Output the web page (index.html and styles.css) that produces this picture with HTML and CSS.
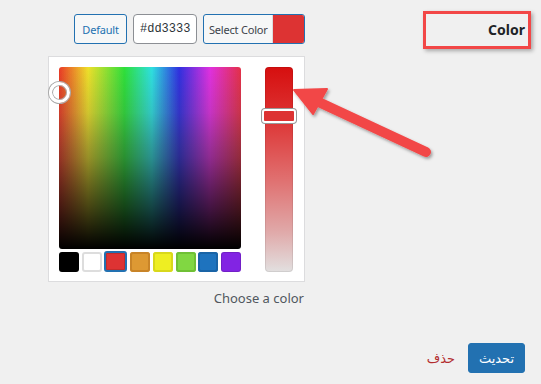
FILE: index.html
```html
<!DOCTYPE html>
<html lang="en">
<head>
<meta charset="utf-8">
<title>Color</title>
<link rel="stylesheet" href="styles.css">
</head>
<body>
<div class="page">
  <div class="top">
    <div class="field">
      <div class="controls">
        <button class="btn btn-default">Default</button>
        <input class="hex" type="text" value="#dd3333">
        <button class="btn btn-select"><span class="sel-text">Select Color</span><span class="sel-swatch"></span></button>
      </div>
      <div class="panel">
        <div class="picker-left">
          <div class="square">
            <span class="marker"></span>
          </div>
          <div class="swatches">
            <span class="sw sw-black"></span>
            <span class="sw sw-white"></span>
            <span class="sw sw-red sw-active"></span>
            <span class="sw sw-orange"></span>
            <span class="sw sw-yellow"></span>
            <span class="sw sw-green"></span>
            <span class="sw sw-blue"></span>
            <span class="sw sw-purple"></span>
          </div>
        </div>
        <div class="slider">
          <span class="handle"></span>
        </div>
      </div>
      <div class="hint">Choose a color</div>
    </div>
    <div class="label-box"><span class="label-text">Color</span></div>
  </div>
  <div class="footer">
    <a class="delete" href="#">حذف</a>
    <button class="btn btn-primary">تحديث</button>
  </div>
  <svg class="arrow" width="541" height="384" viewBox="0 0 541 384">
    <defs>
      <filter id="sh" x="-20%" y="-20%" width="140%" height="140%">
        <feDropShadow dx="1.5" dy="2" stdDeviation="1.5" flood-color="#000" flood-opacity="0.35"/>
      </filter>
    </defs>
    <g filter="url(#sh)" fill="#f24747" stroke="#f24747">
      <line x1="426" y1="152" x2="310" y2="98" stroke-width="10" stroke-linecap="round"/>
      <polygon points="294,90 327,89 313,114" stroke-width="2" stroke-linejoin="round"/>
    </g>
  </svg>
</div>
</body>
</html>
```
FILE: styles.css
```css
* { box-sizing: border-box; }
html, body { margin: 0; padding: 0; }
body {
  background: #f0f0f0;
  font-family: "Noto Sans", "Open Sans", sans-serif;
  color: #3c434a;
  width: 541px;
  height: 384px;
  overflow: hidden;
}
.page { position: relative; width: 541px; height: 384px; }
.top { display: flex; align-items: flex-start; }
.field {
  margin-left: 48px;
  width: 257px;
  display: flex;
  flex-direction: column;
  align-items: flex-end;
}
.controls {
  margin-top: 14px;
  display: flex;
  height: 30px;
}
.btn {
  font-family: "Noto Sans", "Open Sans", sans-serif;
  font-size: 11px;
  letter-spacing: -0.2px;
  height: 30px;
  border-radius: 3px;
  padding: 0;
  cursor: pointer;
  white-space: nowrap;
}
.btn-default {
  width: 53px;
  border: 1px solid #2271b1;
  background: #f6f7f7;
  color: #2271b1;
}
.hex {
  margin-left: 6px;
  width: 64px;
  height: 30px;
  border: 1px solid #8c8f94;
  border-radius: 4px;
  background: #fff;
  font-family: "Liberation Mono", "DejaVu Sans Mono", monospace;
  font-size: 12px;
  color: #2c3338;
  padding: 0 0 0 6px;
}
.btn-select {
  margin-left: 6px;
  width: 102px;
  border: 1px solid #2271b1;
  background: #f6f7f7;
  color: #3c434a;
  display: flex;
  align-items: stretch;
  overflow: hidden;
}
.sel-text {
  flex: 1;
  display: flex;
  align-items: center;
  padding-left: 5px;
  border-right: 1px solid #dcdcde;
}
.sel-swatch { width: 31px; background: #dd3333; }
.panel {
  margin-top: 12px;
  width: 257px;
  height: 226px;
  background: #fff;
  border: 1px solid #dcdcde;
  padding: 10px 0 0 10px;
  display: flex;
  align-items: flex-start;
}
.picker-left { width: 182px; }
.square {
  position: relative;
  width: 182px;
  height: 182px;
  border-radius: 3px;
  background:
    linear-gradient(to bottom, rgba(0,0,0,0) 0%, rgba(0,0,0,0.08) 25%, rgba(0,0,0,0.3) 50%, rgba(0,0,0,0.68) 78%, #000 100%),
    linear-gradient(to bottom, rgba(128,128,128,0) 0%, rgba(120,120,120,0.18) 45%, rgba(100,100,100,0.2) 100%),
    linear-gradient(to right, #ea3a26 0%, #eee02a 16%, #2ee03a 36%, #2ee0e0 51%, #3030e0 66%, #e030e0 83%, #e43048 100%);
}
.marker {
  position: absolute;
  left: -10px;
  top: 15px;
  width: 21px;
  height: 21px;
  border-radius: 50%;
  border: 3px solid #fff;
  box-shadow: 0 0 0 1px #aaa, inset 0 0 0 1px #aaa;
}
.swatches {
  margin-top: 3px;
  display: flex;
  justify-content: space-between;
}
.sw {
  width: 20px;
  height: 20px;
  border-radius: 3px;
  box-shadow: inset 0 0 0 1px rgba(0,0,0,0.12);
}
.sw-black { background: #000; }
.sw-white { background: #fff; box-shadow: inset 0 0 0 2px #ddd; }
.sw-red { background: #dd3333; }
.sw-active { width: 23px; height: 21px; margin-top: -1px; border: 2px solid #2271b1; }
.sw-orange { background: #dd9933; box-shadow: inset 0 0 0 2px #c88428; }
.sw-yellow { background: #eeee22; box-shadow: inset 0 0 0 2px #d8d81c; }
.sw-green { background: #81d742; box-shadow: inset 0 0 0 2px #6fc035; }
.sw-blue { background: #1e73be; box-shadow: inset 0 0 0 2px #1a64a6; }
.sw-purple { background: #8224e3; }
.slider {
  position: relative;
  margin-left: 24px;
  width: 28px;
  height: 205px;
  border-radius: 4px;
  background: linear-gradient(to bottom, #d60f0f 0%, #dd3333 25%, #e07070 55%, #e0a8a8 80%, #e2e0e0 100%);
  box-shadow: inset 0 0 0 1px rgba(0,0,0,0.08);
}
.handle {
  position: absolute;
  left: -3px;
  top: 42px;
  width: 34px;
  height: 14px;
  border: 2px solid #fff;
  border-radius: 3px;
  box-shadow: 0 0 0 1px #999;
  background: #dd3333;
}
.hint {
  margin-top: 7px;
  font-size: 13px;
  color: #50575e;
  padding-right: 1px;
}
.label-box {
  margin-left: 118px;
  margin-top: 11px;
  width: 108px;
  height: 38px;
  border: 3px solid #f24747;
  box-shadow: 2px 2px 4px rgba(0,0,0,0.3);
  display: flex;
  align-items: center;
  justify-content: flex-end;
  padding-right: 3px;
  padding-bottom: 2px;
}
.label-text {
  font-weight: bold;
  font-size: 14px;
  color: #1d2327;
}
.footer {
  position: absolute;
  left: 0;
  right: 16px;
  top: 343px;
  display: flex;
  justify-content: flex-end;
  align-items: center;
}
.delete {
  font-family: "DejaVu Sans", "Noto Sans", sans-serif;
  font-size: 13px;
  color: #b32d2e;
  text-decoration: none;
  margin-right: 13px;
}
.btn-primary {
  font-family: "DejaVu Sans", "Noto Sans", sans-serif;
  width: 57px;
  border: 1px solid #2271b1;
  background: #2271b1;
  color: #fff;
  font-size: 13px;
  letter-spacing: 0;
}
.arrow {
  position: absolute;
  left: 0;
  top: 0;
  pointer-events: none;
}
```
